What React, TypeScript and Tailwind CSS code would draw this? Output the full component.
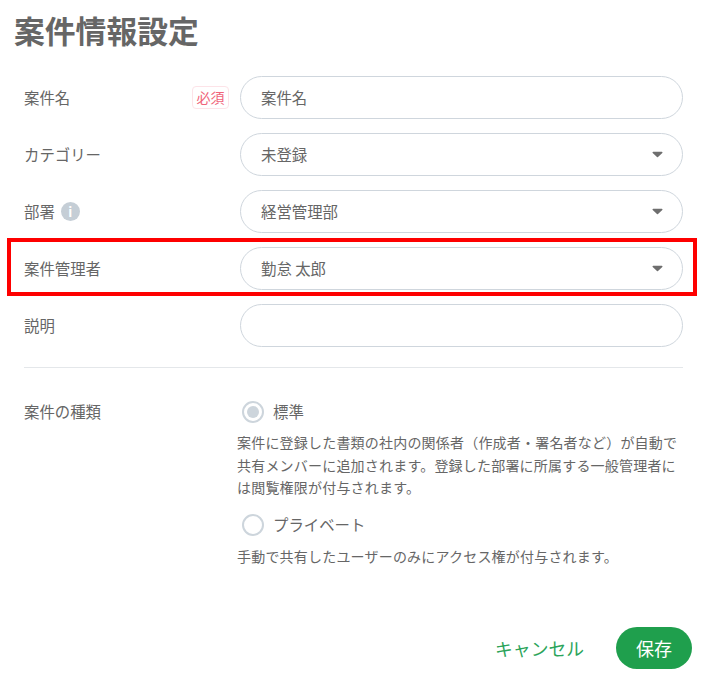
const FONT = "font-['Noto_Sans_CJK_JP','Noto_Sans',sans-serif]";

function Caret() {
  return (
    <svg width="11" height="7" viewBox="0 0 11 7" className="shrink-0">
      <path d="M1.2 .8h8.6a.7.7 0 0 1 .5 1.2L6 6a.7.7 0 0 1-1 0L.7 2a.7.7 0 0 1 .5-1.2z" fill="#6e6e6e" />
    </svg>
  );
}

function Field({ value, select }: { value?: string; select?: boolean }) {
  return (
    <div className="flex h-[43px] w-[443px] items-center justify-between rounded-full border border-[#cfd6dd] pl-5 pr-[19px] text-[15.4px] text-[#666666]">
      <span className="pt-px">{value}</span>
      {select && <Caret />}
    </div>
  );
}

function Row({ label, children, value, select }: { label?: string; children?: React.ReactNode; value?: string; select?: boolean }) {
  return (
    <div className="flex items-center">
      <div className="flex w-[216px] items-center pr-[11px] text-[15.4px] text-[#666666]">
        {label && <span className="pt-px">{label}</span>}
        {children}
      </div>
      <Field value={value} select={select} />
    </div>
  );
}

function Radio({ checked, label }: { checked?: boolean; label: string }) {
  return (
    <div className="flex items-center gap-[9px] pl-[5px] text-[15.4px] text-[#666666]">
      <span className="flex h-[22px] w-[22px] items-center justify-center rounded-full border-2 border-[#cdd5dc]">
        {checked && <span className="h-[12px] w-[12px] rounded-full bg-[#cdd5dc]" />}
      </span>
      <span className="-mt-px">{label}</span>
    </div>
  );
}

export default function App() {
  return (
    <div className={`relative h-[682px] w-[707px] overflow-hidden bg-white ${FONT}`}>
      <h1 className="pl-[14px] pt-[8px] text-[30.8px] leading-[44px] font-bold text-[#666666]">案件情報設定</h1>

      <div className="mt-[24px] flex flex-col gap-[14px] pl-6">
        <Row value="案件名">
          <span className="flex-1 pt-px">案件名</span>
          <span className="flex h-[23px] w-[37px] items-center justify-center rounded-[4px] border border-[#fde3e8] text-[14px] text-[#f0647a]">必須</span>
        </Row>
        <Row label="カテゴリー" value="未登録" select />
        <Row value="経営管理部" select>
          <span className="pt-px">部署</span>
          <span className="ml-[6px] flex h-[19px] w-[19px] items-center justify-center rounded-full bg-[#c5ced6] text-[13px] font-bold text-white">i</span>
        </Row>
        <Row label="案件管理者" value="勤怠 太郎" select />
        <Row label="説明" />
      </div>

      <div className="ml-6 mt-[20px] h-px w-[659px] bg-[#e4e7ea]" />

      <div className="mt-[33px] flex pl-6">
        <div className="-mt-px w-[213px] text-[15.4px] leading-[22px] text-[#666666]">案件の種類</div>
        <div className="flex-1">
          <Radio checked label="標準" />
          <p className="mt-[8px] w-[446px] text-[14px] leading-[22.5px] tracking-[0.2px] text-[#666666]">
            案件に登録した書類の社内の関係者（作成者・署名者など）が自動で共有メンバーに追加されます。登録した部署に所属する一般管理者には閲覧権限が付与されます。
          </p>
          <div className="mt-[15px]">
            <Radio label="プライベート" />
          </div>
          <p className="mt-[9px] text-[14px] leading-[22.5px] tracking-[0.2px] text-[#666666]">
            手動で共有したユーザーのみにアクセス権が付与されます。
          </p>
        </div>
      </div>

      <div className="mt-[60px] flex items-center justify-end gap-8 pr-[15px]">
        <span className="text-[17.8px] text-[#2ba45a]">キャンセル</span>
        <span className="flex h-[42px] w-[76px] items-center justify-center rounded-full bg-[#1f9f4d] text-[18px] text-white">保存</span>
      </div>

      {/* red annotation over the manager row */}
      <div className="absolute left-[7px] top-[238px] h-[58px] w-[690px] border-[4px] border-[#fe0000]" />
    </div>
  );
}
